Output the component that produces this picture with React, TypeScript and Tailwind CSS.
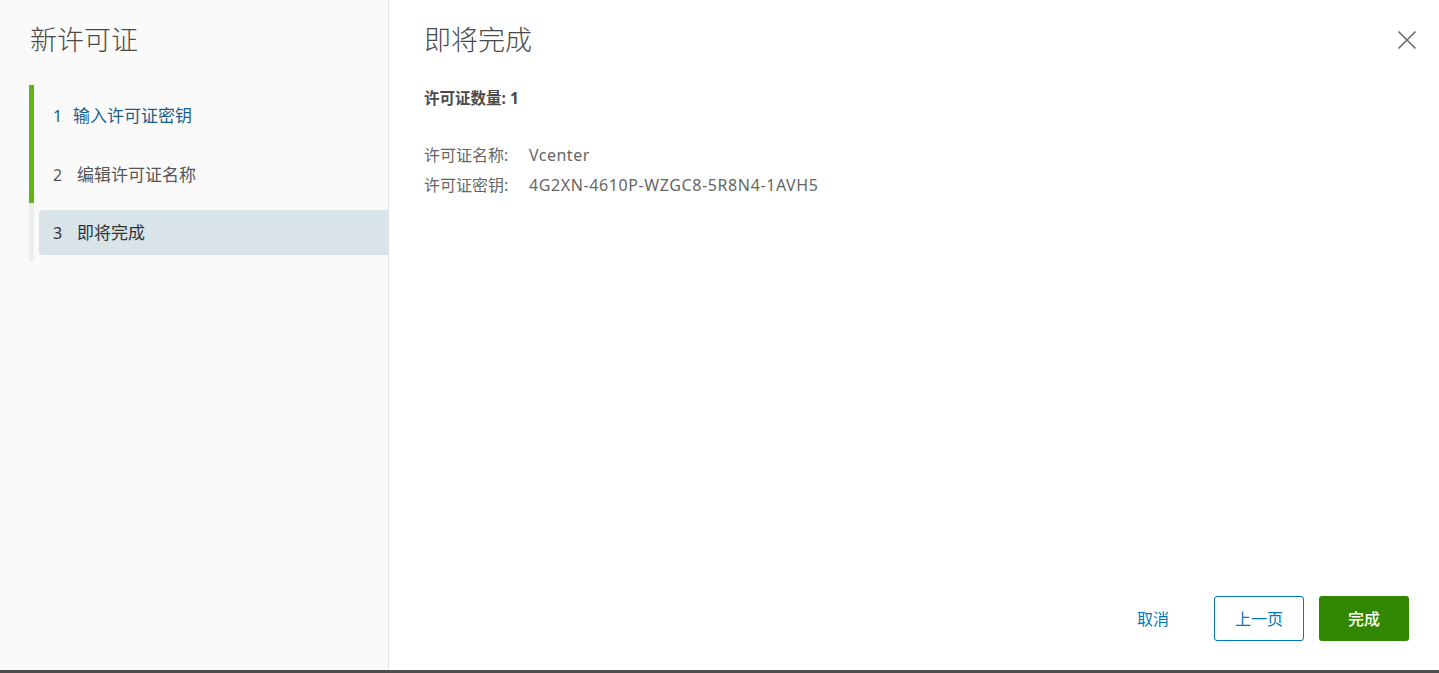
import React from "react";

const font = { fontFamily: '"Noto Sans", "Noto Sans CJK SC", sans-serif' };

export default function App() {
  return (
    <div
      className="w-[1439px] h-[673px] flex flex-col bg-white overflow-hidden"
      style={font}
    >
      <div className="flex flex-1 min-h-0">
        {/* Left panel */}
        <div className="w-[389px] shrink-0 bg-[#fafafa] border-r border-[#e3e3e3] flex flex-col pt-[22px] pl-[29px]">
          <h1 className="text-[27px] leading-[36px] font-light text-[#4a4a4a] pl-px">
            新许可证
          </h1>
          <div className="mt-[27px] flex flex-col">
            <div className="border-l-[5px] border-[#60b515] flex flex-col pt-[1px]">
              <div className="h-[60px] flex items-center pl-[19px] text-[17px] text-[#1a5f8c]">
                <span className="w-[20px] text-[16px]">1</span>
                <span>输入许可证密钥</span>
              </div>
              <div className="h-[57px] flex items-center pl-[19px] text-[17px] text-[#565656]">
                <span className="w-[24px] text-[16px]">2</span>
                <span>编辑许可证名称</span>
              </div>
            </div>
            <div className="border-l-[5px] border-[#eeeeee] h-[59px] flex items-center">
              <div className="ml-[5px] flex-1 h-[45px] rounded-l-[3px] bg-[#d8e3ea] flex items-center pl-[14px] text-[17px] text-[#333] pt-[1px]">
                <span className="w-[24px] text-[16px]">3</span>
                <span>即将完成</span>
              </div>
            </div>
          </div>
        </div>

        {/* Right panel */}
        <div className="flex-1 flex flex-col pl-[35px] pr-[30px] pt-[22px] pb-[29px]">
          <div className="flex items-start justify-between">
            <h2 className="text-[27px] leading-[36px] font-light text-[#4a4a4a]">
              即将完成
            </h2>
            <button className="mt-[6px] mr-[-10px] w-[24px] h-[24px] flex items-center justify-center text-[#6a6a6a]">
              <svg width="20" height="20" viewBox="0 0 20 20" fill="none" stroke="currentColor" strokeWidth="1.6">
                <path d="M1.5 1.5 L18.5 18.5 M18.5 1.5 L1.5 18.5" />
              </svg>
            </button>
          </div>
          <div className="mt-[28px] text-[15.5px] font-bold text-[#4a4a4a] leading-[24px]">
            许可证数量: 1
          </div>
          <div className="mt-[30px] flex flex-col text-[16px] text-[#666] leading-[30px]">
            <div className="flex">
              <span className="w-[105px]">许可证名称:</span>
              <span className="tracking-[0.5px]">Vcenter</span>
            </div>
            <div className="flex">
              <span className="w-[105px]">许可证密钥:</span>
              <span className="tracking-[0.6px]">4G2XN-4610P-WZGC8-5R8N4-1AVH5</span>
            </div>
          </div>
          <div className="mt-auto flex justify-end items-center gap-[15px]">
            <button className="h-[45px] px-[14px] text-[16px] text-[#0079b8] mr-[16px]">
              取消
            </button>
            <button className="w-[90px] h-[45px] rounded-[3px] border border-[#0079b8] text-[16px] text-[#0079b8] bg-white">
              上一页
            </button>
            <button className="w-[90px] h-[45px] rounded-[3px] bg-[#318700] text-[16px] font-medium text-white">
              完成
            </button>
          </div>
        </div>
      </div>
      <div className="h-[3px] bg-[#4d4d4d] shrink-0" />
    </div>
  );
}
